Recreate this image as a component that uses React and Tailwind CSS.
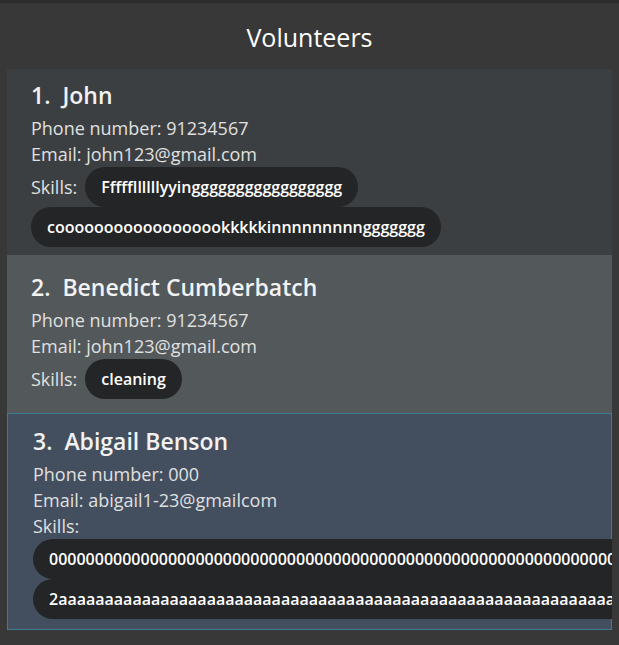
import React from 'react';

const volunteers = [
  {
    id: 1,
    name: 'John',
    phone: '91234567',
    email: 'john123@gmail.com',
    skills: ['Fffffllllllyyinggggggggggggggggg', 'coooooooooooooooookkkkkinnnnnnnnnggggggg'],
  },
  {
    id: 2,
    name: 'Benedict Cumberbatch',
    phone: '91234567',
    email: 'john123@gmail.com',
    skills: ['cleaning'],
  },
  {
    id: 3,
    name: 'Abigail Benson',
    phone: '000',
    email: 'abigail1-23@gmailcom',
    skills: ['0'.repeat(80), '2' + 'a'.repeat(90)],
  },
];

// per-card look: background and the odd paddings of each cell
const cardStyles = {
  1: 'bg-[#3c3f41] pl-[24px] pt-[11px] pb-[8px]',
  2: 'bg-[#53585b] pl-[24px] pt-[17px] pb-[14px]',
  3: 'bg-[#434e5f] border border-[#3b7d91] pl-[25px] pt-[12px] pb-[10px]',
};

const Chip = ({ label }) => (
  <span className="h-[40px] px-4 flex items-center rounded-full bg-[#242526] text-white text-[16px] font-semibold whitespace-nowrap">
    {label}
  </span>
);

const VolunteerCard = ({ v }) => (
  <div className={cardStyles[v.id]}>
    <div className="text-[23px] leading-[30px] font-semibold text-[#f2f2f2]">
      {v.id}.&nbsp;&nbsp;{v.name}
    </div>
    <div className="mt-[5px] text-[18px] leading-[26px] text-[#e0e0e0]">
      <div>Phone number: {v.phone}</div>
      <div>Email: {v.email}</div>
    </div>
    <div className="flex flex-wrap items-center gap-x-2">
      <span className="text-[18px] leading-[26px] text-[#e0e0e0]">Skills:</span>
      {v.skills.map(s => (
        <Chip key={s} label={s} />
      ))}
    </div>
  </div>
);

const App = () => {
  return (
    <div className="w-[619px] h-[645px] overflow-hidden bg-[#383838] border-t-[3px] border-[#2b2b2b] font-['Open_Sans',sans-serif]">
      <div className="h-[66px] pt-1 flex items-center justify-center text-[25px] text-white">
        Volunteers
      </div>
      <div className="mx-[7px] overflow-hidden">
        {volunteers.map(v => (
          <VolunteerCard key={v.id} v={v} />
        ))}
      </div>
    </div>
  );
};

export default App;
